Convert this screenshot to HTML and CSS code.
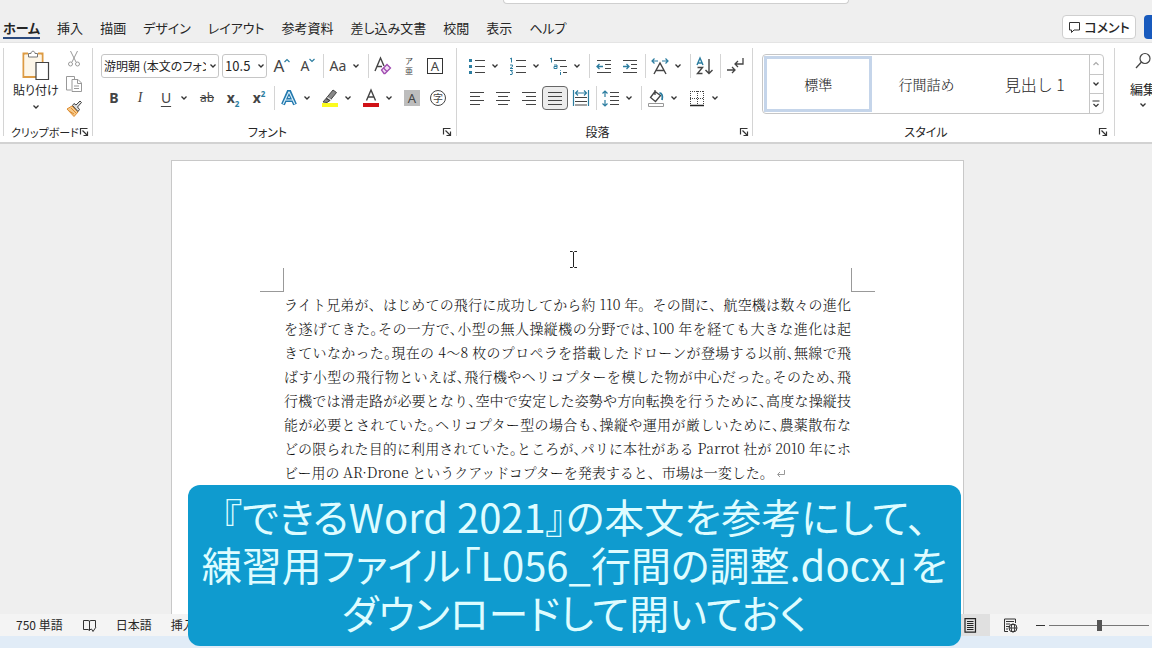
FILE: index.html
```html
<!DOCTYPE html>
<html lang="ja">
<head>
<meta charset="utf-8">
<title>L056_行間の調整.docx - Word</title>
<link rel="stylesheet" href="styles.css">
</head>
<body>
<svg class="defs" aria-hidden="true">
  <symbol id="chev" viewBox="0 0 8 8"><path d="M1.500 2.500 4 5l2.500-2.500" fill="none" stroke="#333" stroke-width="1.300"/></symbol>
  <symbol id="launch" viewBox="0 0 10 10"><path d="M1.500 7.500v-6h7M3.500 3.500l5 5M8.500 4.500v4h-4" fill="none" stroke="#333" stroke-width="1.200"/></symbol>
</svg>
<header class="top">
  <div class="searchbox"></div>
  <nav class="tabs">
    <a class="tab active" href="#">ホーム</a>
    <a class="tab" href="#">挿入</a>
    <a class="tab" href="#">描画</a>
    <a class="tab" href="#">デザイン</a>
    <a class="tab" href="#">レイアウト</a>
    <a class="tab" href="#">参考資料</a>
    <a class="tab" href="#">差し込み文書</a>
    <a class="tab" href="#">校閲</a>
    <a class="tab" href="#">表示</a>
    <a class="tab" href="#">ヘルプ</a>
    <button class="comment"><svg width="13" height="13" viewBox="0 0 13 13"><path d="M1.500 1.500h10v7.500H6L3.500 11.500V9h-2z" fill="none" stroke="#333"/></svg>コメント</button>
    <button class="share" aria-label="共有"></button>
  </nav>
</header>

<section class="ribbon">
  <div class="group clip">
    <div class="clip-body">
      <button class="paste">
        <svg width="28" height="30" viewBox="0 0 28 30"><path d="M6 3.500H1.500v23.500H15M16 3.500h4.500V12" fill="none" stroke="#dd9b43" stroke-width="2"/><path d="M2.500 5h17v7H14v14H2.500z" fill="#fdf6e8"/><path d="M6.500 7V3.500h2.500C9 .5 13 .5 13 3.500h2.500V7z" fill="#fff" stroke="#777"/><path d="M14 12.500h12.500v17H14z" fill="#fff" stroke="#444" stroke-width="1.200"/></svg>
        <span>貼り付け</span>
        <svg class="chev"><use href="#chev"/></svg>
      </button>
      <div class="clip-tools">
        <button class="tool" aria-label="切り取り"><svg width="16" height="18" viewBox="0 0 16 18"><g fill="none" stroke="#999"><path d="M4.500 1l5.500 11M11.500 1 6 12"/><circle cx="4.500" cy="14" r="2"/><circle cx="11.500" cy="14" r="2"/></g></svg></button>
        <button class="tool" aria-label="コピー"><svg width="18" height="18" viewBox="0 0 18 18"><path d="M6 15H1.500V1.500h8V4M7 4.500h6l3.500 3.500v8.500H7zM12.500 5v3.500h4M9 11h5M9 13.500h5" fill="none" stroke="#999"/></svg></button>
        <button class="tool" aria-label="書式のコピー"><svg width="18" height="18" viewBox="0 0 18 18"><path d="M2 9l5-3 6 6-4 4.500z" fill="#f5c98b" stroke="#dd8a2d"/><path d="M4 11l5 3M6 8l5 5" stroke="#dd8a2d"/><path d="M7.500 5.500l5.500 6 1.500-2-2-2.500 4-4.500L15 1l-4 4-2-1.500z" fill="#ddd" stroke="#444"/></svg></button>
      </div>
    </div>
    <div class="caption"><span>クリップボード</span><button class="launch" aria-label="詳細"><svg><use href="#launch"/></svg></button></div>
  </div>

  <div class="group font">
    <div class="row">
      <div class="combo wide"><select aria-label="フォント"><option>游明朝 (本文のフォント)</option></select><svg class="chev"><use href="#chev"/></svg></div>
      <div class="combo"><select aria-label="サイズ"><option>10.5</option></select><svg class="chev"><use href="#chev"/></svg></div>
      <button class="ib big" aria-label="拡大">A<svg width="6" height="5" viewBox="0 0 6 5"><path d="M.5 4 3 1.500 5.500 4" fill="none" stroke="#2c7da0" stroke-width="1.200"/></svg></button>
      <button class="ib" aria-label="縮小">A<svg width="6" height="5" viewBox="0 0 6 5"><path d="M.5 1 3 3.500 5.500 1" fill="none" stroke="#2c7da0" stroke-width="1.200"/></svg></button>
      <i class="sep"></i>
      <button class="dd" aria-label="文字種の変換"><span>Aa</span><svg class="chev"><use href="#chev"/></svg></button>
      <i class="sep"></i>
      <button class="ib" aria-label="書式のクリア"><svg width="20" height="20" viewBox="0 0 20 20"><path d="M2 15 7.500 2 11 10M4 10.500h5" fill="none" stroke="#444" stroke-width="1.400"/><path d="M8.500 14l5.500-5.500 3.500 3.500-5.500 5.500H11z" fill="#f1def5" stroke="#a04bb0" stroke-width="1.300"/><path d="M10.500 12l3.500 3.500" stroke="#a04bb0" stroke-width="1.300"/></svg></button>
      <button class="ib ruby" aria-label="ルビ"><span>ア</span><span>亜</span></button>
      <button class="ib"><span class="boxed">A</span></button>
    </div>
    <div class="row">
      <button class="ib b">B</button>
      <button class="ib i">I</button>
      <button class="dd" aria-label="下線"><span class="u">U</span><svg class="chev"><use href="#chev"/></svg></button>
      <button class="ib s">ab</button>
      <button class="ib b"><span>x<sub>2</sub></span></button>
      <button class="ib b"><span>x<sup>2</sup></span></button>
      <i class="sep"></i>
      <button class="dd" aria-label="文字の効果"><svg width="20" height="20" viewBox="0 0 20 20"><path d="M4 16.500 9.500 4h1L16 16.500M6 12h8" fill="none" stroke="#2379ae" stroke-width="4"/><path d="M4.200 16 9.800 4h.4l5.600 12M6 12h8" fill="none" stroke="#d9eefa" stroke-width="1.200"/></svg><svg class="chev"><use href="#chev"/></svg></button>
      <button class="dd" aria-label="蛍光ペン"><svg width="20" height="20" viewBox="0 0 20 20"><path d="M6 10.500l7-8.500 3.500 2.500-6.500 8zM6 10.500l-3 3.500 4 .5 3-2z" fill="#888" stroke="#444"/><path d="M7.500 9.500l3.500 2.500" stroke="#fff"/><path d="M2 15h16v4H2z" fill="#fbfb1e"/></svg><svg class="chev"><use href="#chev"/></svg></button>
      <button class="dd" aria-label="フォントの色"><svg width="20" height="20" viewBox="0 0 20 20"><path d="M5.500 12.500 10 2l4.500 10.500M7 9h6" fill="none" stroke="#444" stroke-width="1.400"/><path d="M2 15h16v4H2z" fill="#d01217"/></svg><svg class="chev"><use href="#chev"/></svg></button>
      <button class="ib"><span class="shade">A</span></button>
      <button class="ib"><span class="ring">字</span></button>
    </div>
    <div class="caption"><span>フォント</span><button class="launch" aria-label="詳細"><svg><use href="#launch"/></svg></button></div>
  </div>

  <div class="group para">
    <div class="row">
      <button class="dd" aria-label="箇条書き"><svg width="20" height="20" viewBox="0 0 20 20"><path d="M2 3h3v3H2zM2 9h3v3H2zM2 15h3v3H2z" fill="#2c7da0"/><path d="M8 4.500h10M8 10.500h10M8 16.500h10" stroke="#444" stroke-width="1.200"/></svg><svg class="chev"><use href="#chev"/></svg></button>
      <button class="dd" aria-label="段落番号"><svg width="20" height="20" viewBox="0 0 20 20"><path d="M2 3l1.500-1v4.500M2 9h2.500v1.500L2 12.500h3M2 14.500h2.500l-1 1.500 1 .5-.5 2H2" fill="none" stroke="#2c7da0"/><path d="M8 4.500h10M8 10.500h10M8 16.500h10" stroke="#444" stroke-width="1.200"/></svg><svg class="chev"><use href="#chev"/></svg></button>
      <button class="dd" aria-label="アウトライン"><svg width="20" height="20" viewBox="0 0 20 20"><path d="M1 3l1.500-1v4.500M5 9h3v3.500H5v-2h3M11.500 14v.8M11.500 16v3" fill="none" stroke="#2c7da0"/><path d="M5 4.500h12M11 10.500h7M14 16.500h4" stroke="#444" stroke-width="1.200"/></svg><svg class="chev"><use href="#chev"/></svg></button>
      <i class="sep"></i>
      <button class="ib" aria-label="インデント解除"><svg width="20" height="20" viewBox="0 0 20 20"><path d="M3 4.500h14M11 8.500h6M11 12.500h6M3 16.500h14" stroke="#444" stroke-width="1.200"/><path d="M9 10.500H3M5.500 8 3 10.500 5.500 13" fill="none" stroke="#2c7da0" stroke-width="1.300"/></svg></button>
      <button class="ib" aria-label="インデント"><svg width="20" height="20" viewBox="0 0 20 20"><path d="M3 4.500h14M11 8.500h6M11 12.500h6M3 16.500h14" stroke="#444" stroke-width="1.200"/><path d="M3 10.500h6M6.500 8 9 10.500 6.500 13" fill="none" stroke="#2c7da0" stroke-width="1.300"/></svg></button>
      <i class="sep"></i>
      <button class="dd" aria-label="拡張書式"><svg width="20" height="20" viewBox="0 0 20 20"><path d="M4 18l6-11 6 11M6 14.500h8" fill="none" stroke="#444" stroke-width="1.400"/><path d="M2 5h6M4.500 2.500 2 5l2.500 2.500M12 5h6M15.500 2.500 18 5l-2.500 2.500" fill="none" stroke="#2c7da0" stroke-width="1.200"/></svg><svg class="chev"><use href="#chev"/></svg></button>
      <i class="sep"></i>
      <button class="ib" aria-label="並べ替え"><svg width="20" height="20" viewBox="0 0 20 20"><path d="M2 9 5 2l3 7M3 7h4" fill="none" stroke="#2c7da0" stroke-width="1.400"/><path d="M2.500 11.500h5l-5 6h5M14 3v14.500M10.500 14l3.500 3.500 3.500-3.500" fill="none" stroke="#444" stroke-width="1.400"/></svg></button>
      <i class="sep"></i>
      <button class="ib" aria-label="編集記号"><svg width="20" height="20" viewBox="0 0 20 20"><path d="M18 2v6h-8M13 5l-3 3 3 3M2 14h8M7 11l3 3-3 3" fill="none" stroke="#444" stroke-width="1.300"/></svg></button>
    </div>
    <div class="row">
      <button class="ib" aria-label="左揃え"><svg width="20" height="20" viewBox="0 0 20 20"><path d="M3 4.500h14M3 8.500h10M3 12.500h14M3 16.500h10" stroke="#444" stroke-width="1.200"/></svg></button>
      <button class="ib" aria-label="中央揃え"><svg width="20" height="20" viewBox="0 0 20 20"><path d="M3 4.500h14M5 8.500h10M3 12.500h14M5 16.500h10" stroke="#444" stroke-width="1.200"/></svg></button>
      <button class="ib" aria-label="右揃え"><svg width="20" height="20" viewBox="0 0 20 20"><path d="M3 4.500h14M7 8.500h10M3 12.500h14M7 16.500h10" stroke="#444" stroke-width="1.200"/></svg></button>
      <button class="ib on" aria-label="両端揃え"><svg width="20" height="20" viewBox="0 0 20 20"><path d="M3 4.500h14M3 8.500h14M3 12.500h14M3 16.500h14" stroke="#444" stroke-width="1.200"/></svg></button>
      <button class="ib" aria-label="均等割り付け"><svg width="20" height="20" viewBox="0 0 20 20"><path d="M4 9.500h12M4 13.500h12M4 17h12" stroke="#444" stroke-width="1.200"/><path d="M2.500 2v16M17.500 2v16M4.500 5h11M7 2.500 4.500 5 7 7.500M13 2.500 15.500 5 13 7.500" fill="none" stroke="#2c7da0" stroke-width="1.200"/></svg></button>
      <i class="sep"></i>
      <button class="dd" aria-label="行間"><svg width="20" height="20" viewBox="0 0 20 20"><path d="M9 4.500h9M9 8.500h9M9 12.500h9M9 16.500h9" stroke="#444" stroke-width="1.200"/><path d="M4 3v6M1.500 5.500 4 3l2.500 2.500M4 12v6M1.500 15.500 4 18l2.500-2.500" fill="none" stroke="#2c7da0" stroke-width="1.200"/></svg><svg class="chev"><use href="#chev"/></svg></button>
      <i class="sep"></i>
      <button class="dd" aria-label="塗りつぶし"><svg width="20" height="20" viewBox="0 0 20 20"><path d="M9 2v5M9 3.500 4.500 9.500l5 4 5-6z" fill="none" stroke="#444" stroke-width="1.300"/><path d="M13.500 5c2.500 0 3.500 3 2.500 7" fill="none" stroke="#2c7da0" stroke-width="1.800"/><path d="M2.500 15.500h15v3h-15z" fill="#fff" stroke="#999"/></svg><svg class="chev"><use href="#chev"/></svg></button>
      <button class="dd" aria-label="罫線"><svg width="20" height="20" viewBox="0 0 20 20"><path d="M3 3.500h14M3 10.500h14M3.500 3v14M10.500 3v14M16.500 3v14" stroke="#444" stroke-dasharray="1 1"/><path d="M3 17.500h14" stroke="#222" stroke-width="1.500"/></svg><svg class="chev"><use href="#chev"/></svg></button>
    </div>
    <div class="caption"><span>段落</span><button class="launch" aria-label="詳細"><svg><use href="#launch"/></svg></button></div>
  </div>

  <div class="group styles">
    <div class="gallery">
      <button class="style selected">標準</button>
      <button class="style">行間詰め</button>
      <button class="style heading">見出し 1</button>
      <div class="scroll">
        <button class="dim" aria-label="上へ"><svg class="chev" viewBox="0 0 8 8"><path d="M1.500 5 4 2.500 6.500 5" fill="none" stroke="#aaa" stroke-width="1.200"/></svg></button>
        <button aria-label="下へ"><svg class="chev"><use href="#chev"/></svg></button>
        <button aria-label="その他"><svg class="chev" viewBox="0 0 8 8"><path d="M.5 1h7M1.500 4 4 6.500 6.500 4" fill="none" stroke="#333" stroke-width="1.200"/></svg></button>
      </div>
    </div>
    <div class="caption"><span>スタイル</span><button class="launch" aria-label="詳細"><svg><use href="#launch"/></svg></button></div>
  </div>

  <div class="group edit">
    <button class="paste">
      <svg width="18" height="18" viewBox="0 0 18 18"><circle cx="11" cy="6.500" r="5" fill="none" stroke="#444" stroke-width="1.200"/><path d="M7.500 10 2 16" stroke="#444" stroke-width="1.300"/></svg>
      <span>編集</span>
      <svg class="chev"><use href="#chev"/></svg>
    </button>
  </div>
</section>

<main class="workspace">
  <article class="page">
    <div class="marks"><i class="mark left"></i><i class="mark right"></i></div>
    <p class="text">
      <span>ライト兄弟が、はじめての飛行に成功してから約 110 年。その間に、航空機は数々の進化</span>
      <span class="tight">を遂げてきた。その一方で、小型の無人操縦機の分野では、100 年を経ても大きな進化は起</span>
      <span class="tight">きていなかった。現在の 4～8 枚のプロペラを搭載したドローンが登場する以前、無線で飛</span>
      <span class="tight">ばす小型の飛行物といえば、飛行機やヘリコプターを模した物が中心だった。そのため、飛</span>
      <span class="tight">行機では滑走路が必要となり、空中で安定した姿勢や方向転換を行うために、高度な操縦技</span>
      <span class="tight">能が必要とされていた。ヘリコプター型の場合も、操縦や運用が厳しいために、農薬散布な</span>
      <span class="tight">どの限られた目的に利用されていた。ところが、パリに本社がある Parrot 社が 2010 年にホ</span>
      <span class="last">ビー用の AR·Drone というクアッドコプターを発表すると、市場は一変した。<svg width="10" height="9" viewBox="0 0 10 9"><path d="M8.500 1v4.500H2M4 3 1.500 5.500 4 8" fill="none" stroke="#999"/></svg></span>
    </p>
    <svg class="caret" width="9" height="17" viewBox="0 0 9 17"><path d="M1 .5h2.500l1 1 1-1H8M4.500 1v15M1 16.500h2.500l1-1 1 1H8" fill="none" stroke="#222"/></svg>
  </article>
</main>

<footer class="status">
  <span>750 単語</span>
  <svg width="15" height="15" viewBox="0 0 15 15"><path d="M7.500 3v9.500L6 11.500H1.500v-9H6zM7.500 3 9 2.500h4.500V9M7.500 12l2-1 1.500 2.500L14 9" fill="none" stroke="#333"/></svg>
  <span>日本語</span>
  <span>挿入</span>
  <button class="view current" aria-label="印刷レイアウト"><svg width="13" height="15" viewBox="0 0 13 15"><path d="M1 .7h10.500v13.500H1zM3 3.500h6.500M3 5.500h6.500M3 7.500h6.500M3 9.500h6.500M3 11.500h6.500" fill="none" stroke="#222" stroke-width="1.200"/></svg></button>
  <button class="view" aria-label="Web レイアウト"><svg width="15" height="15" viewBox="0 0 15 15"><path d="M5 13.500H1.500V1h11v4M3 3.500h8M3 6h4M3 8.500h3M3 11h2" fill="none" stroke="#333"/><g fill="none" stroke="#333"><circle cx="10" cy="10" r="4"/><ellipse cx="10" cy="10" rx="1.800" ry="4"/><path d="M6 10h8"/></g></svg></button>
  <button class="minus" aria-label="縮小"></button>
  <input class="zoom" type="range" min="0" max="100" value="50" aria-label="ズーム">
</footer>
<div class="taskbar"></div>

<aside class="callout">
  <p>『できるWord 2021』の本文を参考にして、</p>
  <p>練習用ファイル「L056_行間の調整.docx」を</p>
  <p>ダウンロードして開いておく</p>
</aside>
</body>
</html>
```
FILE: styles.css
```css
* { box-sizing: border-box; }
body {
  margin: 0;
  height: 100vh;
  display: flex;
  flex-direction: column;
  overflow: hidden;
  position: relative;
  background: #efefef;
  color: #262626;
  font: 13px/18px "Noto Sans CJK JP", sans-serif;
  font-feature-settings: "palt";
}
button, select, input { font: inherit; color: inherit; font-feature-settings: inherit; }
button { border: 0; padding: 0; background: none; }
svg { flex: none; }
.defs { position: absolute; width: 0; height: 0; }
.chev { width: 8px; height: 8px; }

.top { flex: none; height: 42px; display: flex; flex-direction: column; }
.searchbox {
  height: 4px;
  width: 30%;
  margin-left: 503px;
  flex: none;
  background: #fff;
  border: 1px solid #cfcfcf;
  border-top: 0;
  border-radius: 0 0 4px 4px;
}
.tabs { flex: 1; display: flex; align-items: flex-start; gap: 17px; padding: 11px 0 0 3px; }
.tab { color: inherit; text-decoration: none; white-space: nowrap; line-height: 22px; height: 24px; padding-top: 2px; }
.tab.active { font-weight: 700; border-bottom: 2px solid #2b4a7d; }
.comment {
  margin-left: auto;
  margin-right: -9px;
  width: 74px;
  height: 24px;
  display: flex;
  align-items: center;
  justify-content: center;
  gap: 3px;
  background: #fff;
  border: 1px solid #cfcfcf;
  border-radius: 4px;
  font-weight: 500;
}
.share { width: 8px; height: 24px; background: #185abd; border-radius: 4px 0 0 4px; }

.ribbon {
  flex: none;
  height: 102px;
  display: flex;
  padding: 5px 0 6px 3px;
  background: #fff;
  border-top: 1px solid #e4e4e4;
  border-bottom: 2px solid #d2d2d2;
}
.group { border-left: 1px solid #d4d4d4; display: flex; flex-direction: column; padding: 0 7px; flex: none; }
.clip { width: 89px; }
.font { width: 364px; padding: 0 8px; }
.para { width: 296px; }
.styles { flex: 1; padding: 0 10px 0 9px; }
.edit { width: 38px; overflow: hidden; padding: 4px 0 0 14px; }
.row { height: 32px; margin-top: 2px; display: flex; align-items: center; flex: none; }
.row + .row { margin-top: 0; }
.caption {
  flex: none;
  height: 20px;
  margin-top: auto;
  margin-bottom: -6px;
  padding-right: 14px;
  position: relative;
  text-align: center;
  font-size: 12px;
  line-height: 20px;
  white-space: nowrap;
}
.clip .caption { text-align: left; font-size: 11px; }
.launch { position: absolute; right: -4px; top: 5px; width: 10px; height: 10px; display: flex; }
.launch svg { width: 10px; height: 10px; }
.clip-body { display: flex; justify-content: space-between; padding: 2px 2px 0; height: 70px; }
.paste { display: flex; flex-direction: column; align-items: center; white-space: nowrap; font-size: 12px; line-height: 20px; }
.clip-tools { display: flex; flex-direction: column; gap: 7px; align-items: center; }
.tool { width: 18px; height: 18px; display: flex; justify-content: center; }
.clip .chev { margin-top: 3px; }
.edit .paste { gap: 9px; width: 28px; font-size: 13px; }
.edit .chev { margin-top: -7px; }

.combo { position: relative; width: 46px; height: 24px; margin-right: 2px; }
.combo.wide { width: 121px; margin-right: 3px; }
.combo select {
  appearance: none;
  width: 100%;
  height: 24px;
  border: 1px solid #c6c6c6;
  border-radius: 3px;
  background: #fff;
  padding: 0 12px 0 2px;
  overflow: hidden;
}
.combo.wide select { font-size: 12px; }
.combo .chev { position: absolute; right: 2px; top: 8px; }
.sep { flex: none; width: 1px; height: 24px; margin: 0 1px 0 2px; background: #d4d4d4; }
.ib { width: 26px; height: 24px; display: flex; align-items: center; justify-content: center; flex: none; font-family: "Noto Sans", sans-serif; color: #444; font-size: 14px; }
.ib > svg[height="5"] { align-self: flex-start; margin-top: 4px; }
.big { font-size: 17px; }
.dd { width: 41px; height: 24px; display: flex; align-items: center; flex: none; padding: 0 4px 0 3px; gap: 4px; font-family: "Noto Sans", sans-serif; color: #444; font-size: 14px; }
.dd > span { width: 20px; text-align: center; }
.on { background: #ececec; border: 1px solid #666; border-radius: 4px; }
.b { font-weight: 700; }
.i { font-family: "Liberation Serif", serif; font-style: italic; }
.u { text-decoration: underline; text-underline-offset: 3px; }
.s { text-decoration: line-through; font-size: 12px; }
sub, sup { font-size: 8px; line-height: 0; color: #2c7da0; }
.ruby { flex-direction: column; font: 8px/10px "Noto Sans CJK JP", sans-serif; }
.boxed, .shade { width: 16px; height: 16px; line-height: 14px; text-align: center; font-size: 13px; }
.boxed { border: 1px solid #333; }
.shade { background: #bdbdbd; line-height: 16px; }
.ring { width: 16px; height: 16px; border: 1px solid #444; border-radius: 50%; font: 10px/13px "Noto Sans CJK JP", sans-serif; }

.gallery { flex: none; height: 60px; margin-top: 6px; display: flex; border: 1px solid #c6c6c6; border-radius: 4px; padding-left: 1px; }
.style { flex: 1; margin: 1px 0; border: 3px solid transparent; font: 300 14px/20px "Noto Serif CJK JP", "Noto Sans CJK JP", serif; }
.style.selected { border-color: #c5d5ea; }
.style.heading { font-size: 16px; line-height: 18px; font-family: "Noto Sans CJK JP", sans-serif; }
.scroll { width: 14px; display: flex; flex-direction: column; border-left: 1px solid #c6c6c6; }
.scroll button { flex: 1; display: flex; align-items: center; justify-content: center; }
.scroll button + button { border-top: 1px solid #c6c6c6; }

.workspace { flex: 1; min-height: 0; overflow: hidden; display: flex; justify-content: center; padding: 16px 17px 0 0; }
.page { position: relative; width: 793px; background: #fff; border: 1px solid #c8c8c8; border-bottom: 0; padding: 107px 112px 0; }
.marks { display: flex; justify-content: space-between; margin: 0 -24px; }
.mark { width: 24px; height: 24px; border-bottom: 1px solid #999; }
.mark.left { border-right: 1px solid #999; }
.mark.right { border-left: 1px solid #999; }
.text { margin: 0; font: 300 14px/24px "Noto Serif CJK JP", "Noto Sans CJK JP", serif; color: #111; }
.text span { display: block; text-align: justify; text-align-last: justify; white-space: nowrap; }
.text .tight { font-feature-settings: "halt"; }
.text .last { text-align: left; text-align-last: left; }
.last svg { margin-left: 2px; }
.caret { position: absolute; left: 397px; top: 90px; }

.status { flex: none; height: 22px; display: flex; align-items: center; background: #f4f4f4; padding: 0 3px 0 16px; gap: 19px; font-size: 12px; }
.view { width: 40px; height: 22px; display: flex; align-items: center; justify-content: center; margin-right: -19px; }
.view.current { margin-left: auto; background: #e0e0e0; }
.minus { width: 9px; height: 1px; background: #333; margin: 0 -15px 0 6px; }
.zoom { appearance: none; width: 100px; height: 12px; margin: 0; background: linear-gradient(#777, #777) center / 100% 1px no-repeat; }
.zoom::-webkit-slider-thumb { appearance: none; width: 5px; height: 11px; background: #555; }
.taskbar { flex: none; height: 12px; background: #e1ecf7; }

.callout {
  position: absolute;
  left: 188px;
  top: 485px;
  width: 773px;
  padding: 7px 0 10px;
  border-radius: 12px;
  background: #0f9bcf;
  color: #defcff;
  text-align: center;
  font-size: 40px;
  line-height: 48px;
  white-space: nowrap;
}
.callout p { margin: 0; }
```
